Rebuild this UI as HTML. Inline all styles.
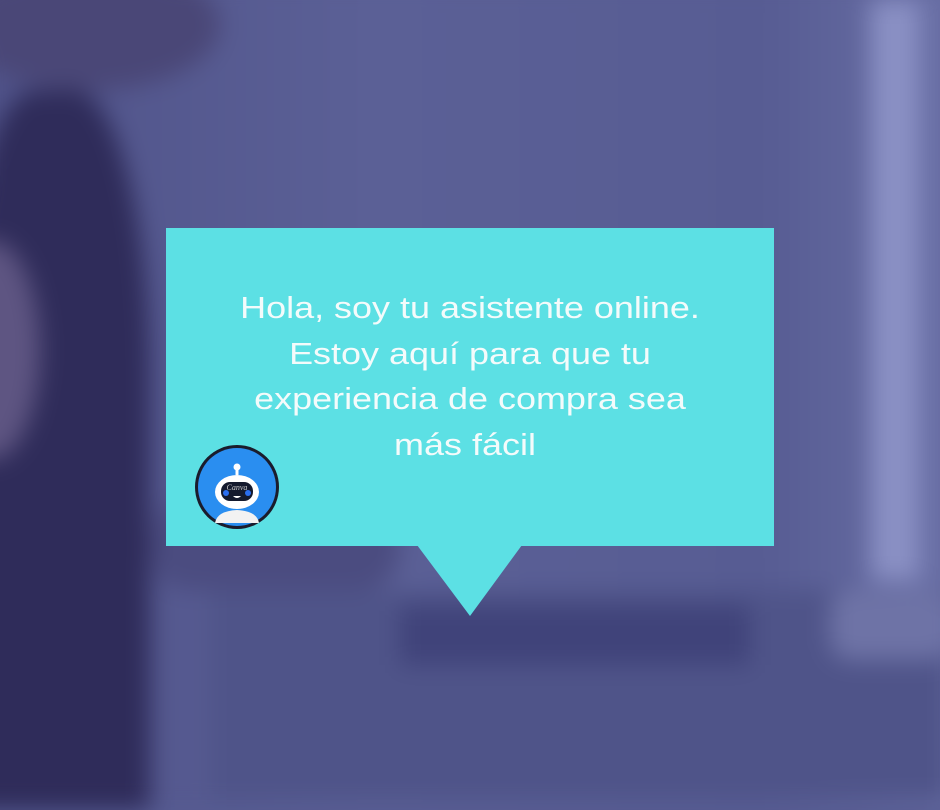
<!DOCTYPE html>
<html><head><meta charset="utf-8"><style>
html,body{margin:0;padding:0}
body{width:940px;height:788px;overflow:hidden;position:relative;background:#575c92;font-family:"Liberation Sans",sans-serif}
.bg{position:absolute;inset:0;filter:blur(12px)}
.s{position:absolute}
.box{position:absolute;left:166px;top:228px;width:608px;height:318px;background:#5ce0e4}
.tail{position:absolute;left:417px;top:545px;width:0;height:0;border-left:53px solid transparent;border-right:52px solid transparent;border-top:71px solid #5ce0e4}
.txt{position:absolute;left:166px;top:285px;width:608px;text-align:center;color:#f4fbfb;font-size:31px;line-height:45.5px;transform:scaleX(1.16);transform-origin:50% 0}
</style></head><body>
<div class="bg">
  <div class="s" style="left:-20px;top:-20px;width:980px;height:830px;background:linear-gradient(90deg,#4f5289 0%,#5b6096 40%,#575c93 80%,#6a70a6 100%)"></div>
  <div class="s" style="left:-40px;top:-40px;width:260px;height:130px;border-radius:50%;background:#4a4777"></div>
  <div class="s" style="left:-40px;top:90px;width:190px;height:720px;background:#2f2c5a;border-radius:40% 40% 0 0"></div>
  <div class="s" style="left:-60px;top:240px;width:100px;height:220px;border-radius:50%;background:#5e5582"></div>
  <div class="s" style="left:150px;top:500px;width:250px;height:90px;border-radius:40px;background:#4b4c80"></div>
  <div class="s" style="left:210px;top:590px;width:740px;height:210px;background:#4f5489"></div>
  <div class="s" style="left:400px;top:605px;width:350px;height:60px;background:#40437a"></div>
  <div class="s" style="left:870px;top:0;width:50px;height:580px;background:#8a90c4"></div>
  <div class="s" style="left:830px;top:590px;width:120px;height:70px;border-radius:20px;background:#6e73a6"></div>
</div>
<div class="box"></div>
<div class="tail"></div>
<div class="txt">Hola, soy tu asistente online.<br>Estoy aquí para que tu<br>experiencia de compra sea<br>más fácil&nbsp;</div>
<svg style="position:absolute;left:193px;top:443px" width="88" height="88" viewBox="0 0 88 88">
  <ellipse cx="44" cy="44" rx="42" ry="42" fill="#1a1c2c"/>
  <ellipse cx="44" cy="44" rx="39" ry="39" fill="#2a8ef0"/>
  <circle cx="44" cy="24" r="3.5" fill="#fff"/>
  <rect x="42.5" y="26" width="3" height="6" fill="#fff"/>
  <ellipse cx="44" cy="49" rx="22" ry="17" fill="#fff"/>
  <rect x="28" y="39" width="32" height="19" rx="9" fill="#141a2e"/>
  <circle cx="33" cy="50" r="3" fill="#2a6ef0"/>
  <circle cx="55" cy="50" r="3" fill="#2a6ef0"/>
  <path d="M40 53 Q44 57 48 53Z" fill="#fff"/>
  <text x="44" y="47" font-size="8" font-style="italic" fill="#ccc" text-anchor="middle" font-family="Liberation Serif,serif">Canva</text>
  <path d="M22 80 Q24 68 44 67 Q64 68 66 80 Z" fill="#f2f2f2"/>
</svg>
</body></html>
